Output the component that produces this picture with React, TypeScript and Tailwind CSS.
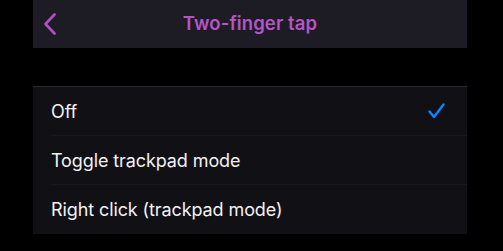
import React from 'react';

const OPTIONS = ['Off', 'Toggle trackpad mode', 'Right click (trackpad mode)'];

export default function App() {
  const selected = 'Off';

  return (
    <div className="w-[503px] h-[251px] bg-black overflow-hidden font-['Inter','Liberation_Sans',sans-serif]">
      <div className="w-[434px] mx-[33px]">
        {/* Nav bar */}
        <div className="h-[48px] bg-[#1d1b23] grid grid-cols-[60px_1fr_60px] items-center">
          <div className="flex justify-start pl-[10px]">
            <svg width="14" height="22" viewBox="0 0 14 22" fill="none">
              <path d="M11.5 1.5L2.5 11L11.5 20.5" stroke="#b24fc6" strokeWidth="2.6" strokeLinecap="round" strokeLinejoin="round" />
            </svg>
          </div>
          <div className="text-center text-[18.5px] font-semibold text-[#b455c8] tracking-[0.1px] pb-[1px]">
            Two-finger tap
          </div>
          <div />
        </div>

        {/* Options list */}
        <div className="mt-[38px] bg-[#111014] border-t border-[#2a292e]">
          {OPTIONS.map((opt, i) => (
            <div key={opt} className="pl-[18px]">
              <div
                className={`h-[49px] flex items-center justify-between pr-[22px] ${
                  i < OPTIONS.length - 1 ? 'border-b border-[#19181d]' : ''
                }`}
              >
                <span className="text-[18px] text-[#f2f2f4] tracking-[-0.1px]">{opt}</span>
                {opt === selected && (
                  <svg width="17" height="16" viewBox="0 0 17 16" fill="none">
                    <path d="M1.5 8.5L6 14L15.5 1.5" stroke="#0a84ff" strokeWidth="2.4" strokeLinecap="round" strokeLinejoin="round" />
                  </svg>
                )}
              </div>
            </div>
          ))}
        </div>
      </div>
    </div>
  );
}
